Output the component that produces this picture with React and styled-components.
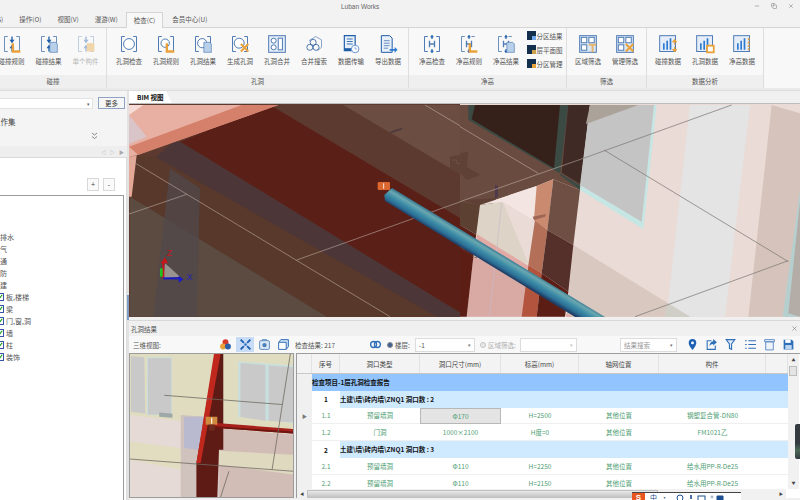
import React from 'react';
import styled, { createGlobalStyle } from 'styled-components';
import { Minus, Copy, X } from 'lucide-react';

const GlobalStyle = createGlobalStyle`
    html, body {
        margin: 0;
        padding: 0;
        background: #f0f0f0;
    }
    body {
        font-family: "Noto Sans CJK SC", "Liberation Sans", sans-serif;
        font-size: 6.5px;
        color: #4a4a4a;
    }
`
const Page = styled.div`
    width: 800px;
    height: 500px;
    position: relative;
    overflow: hidden;
    display: flex;
    flex-direction: column;
    background: #f0f0f0;
`
const TitleBar = styled.div`
    height: 12px;
    display: flex;
    align-items: center;
    background: #f2f2f2;
`
const TitleText = styled.div`
    margin-left: 341px;
    width: 40px;
    font: 6.5px "Liberation Sans", sans-serif;
    color: #666;
    white-space: nowrap;
`
const WindowButtons = styled.div`
    margin-left: auto;
    display: flex;
    gap: 11px;
    padding-right: 6px;
    color: #777;
`
const TabRow = styled.div`
    height: 16px;
    display: flex;
    align-items: flex-end;
    border-bottom: 1px solid #d4d4d4;
    background: #f2f2f2;
    box-sizing: border-box;
`
const Tab = styled.div`
    height: 15px;
    line-height: 15px;
    padding: 0 8px;
    box-sizing: border-box;
    white-space: nowrap;
    color: #555;
    margin-left: ${props => props.$ml || 0};
    ${props => props.$active && `
        background: #f8f8f8;
        border: 1px solid #d4d4d4;
        border-bottom: none;
        height: 16px;
        padding: 0 7px;
        margin-bottom: -1px;
    `}
`
const Ribbon = styled.div`
    height: 60px;
    display: flex;
    background: #f8f8f8;
`
const Group = styled.div`
    width: ${props => props.$w}px;
    display: flex;
    flex-direction: column;
    border-right: 1px solid #dedede;
    box-sizing: content-box;
    overflow: hidden;
`
const GroupItems = styled.div`
    height: 47px;
    display: flex;
    justify-content: ${props => props.$end ? 'flex-end' : 'flex-start'};
    padding: 0 ${props => props.$pr || 0}px 0 ${props => props.$pl || 0}px;
`
const GroupLabel = styled.div`
    height: 13px;
    line-height: 13px;
    text-align: center;
    background: #efefef;
    color: #555;
`
const RibbonItem = styled.div`
    width: 37px;
    flex-shrink: 0;
    display: flex;
    flex-direction: column;
    align-items: center;
    padding-top: 6px;
    gap: 2px;
    white-space: nowrap;
    color: ${props => props.$disabled ? '#b5b5b5' : '#555'};
    & svg {
        opacity: ${props => props.$disabled ? 0.4 : 1};
    }
`
const SmallColumn = styled.div`
    display: flex;
    flex-direction: column;
    gap: 5px;
    padding: 3px 0 0 2px;
`
const SmallItem = styled.div`
    display: flex;
    align-items: center;
    gap: 1px;
    height: 9px;
    white-space: nowrap;
    color: #555;
`
const SmallIcon = styled.span`
    width: 9px;
    height: 9px;
    background: #12304e;
    display: flex;
    align-items: flex-end;
    justify-content: flex-end;
    & i {
        width: 4px;
        height: 4px;
        background: ${props => props.$tone};
    }
`
const RibbonBottom = styled.div`
    height: 3px;
    background: #eaeaea;
    border-bottom: 1px solid #dcdcdc;
    box-sizing: border-box;
`
const Body = styled.div`
    flex: 1;
    min-height: 0;
    display: flex;
`
const LeftPanel = styled.div`
    width: 127px;
    flex-shrink: 0;
    display: flex;
    flex-direction: column;
    background: #f4f4f4;
`
const SearchRow = styled.div`
    display: flex;
    align-items: center;
    padding-top: 6px;
    gap: 5px;
`
const SearchBox = styled.div`
    width: 93px;
    height: 11px;
    background: #fff;
    border: 1px solid #e2e2e2;
    border-left: none;
    box-sizing: border-box;
    display: flex;
    align-items: center;
    justify-content: flex-end;
    padding-right: 2px;
    color: #666;
    font-size: 5px;
`
const MoreButton = styled.div`
    width: 27px;
    height: 12px;
    line-height: 10px;
    background: #f6f6f6;
    border: 1px solid #8ea3c4;
    box-sizing: border-box;
    text-align: center;
    color: #333;
`
const SetLabel = styled.div`
    margin: 7px 0 0 -7px;
    font-size: 7.5px;
    line-height: 11px;
    color: #444;
`
const ChevronRow = styled.div`
    height: 9px;
    margin-top: 5px;
    display: flex;
    justify-content: flex-end;
    padding-right: 29px;
`
const PagerStrip = styled.div`
    height: 12px;
    margin-top: 5px;
    background: #eeeeee;
    border-bottom: 1px solid #dadada;
    box-sizing: border-box;
    display: flex;
    align-items: center;
    justify-content: flex-end;
    gap: 4px;
    padding-right: 3px;
`
const PagerArrow = styled.span`
    color: #a8a8a8;
    font-size: 5px;
    line-height: 6px;
    width: 5px;
    text-align: center;
`
const TreePanel = styled.div`
    flex: 1;
    min-height: 0;
    display: flex;
    flex-direction: column;
    background: #fff;
    border-right: 1px solid #dcdcdc;
`
const ExpandRow = styled.div`
    height: 37px;
    padding: 20px 0 0 87px;
    box-sizing: border-box;
    display: flex;
    gap: 4px;
`
const ExpandButton = styled.div`
    width: 12px;
    height: 13px;
    background: #fafafa;
    border: 1px solid #d8d8d8;
    box-sizing: border-box;
    text-align: center;
    color: #444;
    font: 7px "Liberation Sans", sans-serif;
    line-height: 11px;
`
const TreeBox = styled.div`
    flex: 1;
    margin-right: 2px;
    border-top: 1px solid #9a9a9a;
    border-right: 1px solid #9a9a9a;
    padding-top: 35px;
    overflow: hidden;
`
const TreeRow = styled.div`
    height: 12px;
    line-height: 12px;
    display: flex;
    align-items: center;
    gap: 2px;
    white-space: nowrap;
    font-size: 7px;
    color: #555;
    margin-left: ${props => props.$nested ? '-4px' : '-7px'};
`
const TreeCheck = styled.span`
    width: 8px;
    height: 8px;
    background: #fff;
    border: 1px solid #3a55a8;
    box-sizing: border-box;
    display: flex;
`
const Splitter = styled.div`
    width: 2px;
    flex-shrink: 0;
    background: #e2e2e2;
    position: relative;
    &::after {
        content: "";
        position: absolute;
        left: 0;
        top: 204px;
        width: 2px;
        height: 25px;
        background: #7f9cc2;
    }
`
const Workspace = styled.div`
    flex: 1;
    min-width: 0;
    display: flex;
    flex-direction: column;
`
const ViewTabStrip = styled.div`
    height: 12px;
    display: flex;
    align-items: flex-end;
    background: #f0f0f0;
    border-bottom: 1px solid #bdbdbd;
    box-sizing: content-box;
`
const ViewTab = styled.div`
    width: 43px;
    height: 12px;
    line-height: 12px;
    background: #fff;
    padding-left: 8px;
    box-sizing: border-box;
    color: #111;
    font-weight: 700;
    clip-path: polygon(0 0, 86% 0, 100% 100%, 0 100%);
`
const Viewport = styled.div`
    height: 213px;
    flex-shrink: 0;
    & svg {
        display: block;
    }
`
const ResultPanel = styled.div`
    flex: 1;
    min-height: 0;
    margin-top: 3px;
    display: flex;
    flex-direction: column;
    border-top: 1px solid #d8d8d8;
`
const PanelTitle = styled.div`
    height: 15px;
    display: flex;
    align-items: center;
    justify-content: space-between;
    padding: 0 2px;
    color: #555;
    background: #f0f0f0;
`
const Toolbar = styled.div`
    height: 17px;
    display: flex;
    align-items: center;
    padding-left: 4px;
    background: #f8f8f8;
`
const ToolText = styled.div`
    width: ${props => props.$w}px;
    margin-left: ${props => props.$ml || 0}px;
    flex-shrink: 0;
    white-space: nowrap;
    color: ${props => props.$muted ? '#b0b0b0' : '#555'};
`
const ToolButton = styled.div`
    width: 18px;
    height: 15px;
    flex-shrink: 0;
    margin-left: ${props => props.$ml || 0}px;
    display: flex;
    align-items: center;
    justify-content: center;
    background: ${props => props.$active ? '#c8dcf5' : 'transparent'};
`
const Radio = styled.span`
    width: 6px;
    height: 6px;
    flex-shrink: 0;
    margin-left: ${props => props.$ml || 0}px;
    border-radius: 50%;
    box-sizing: border-box;
    border: 1px solid ${props => props.$on ? '#8a8a8a' : '#c4c4c4'};
    background: ${props => props.$on ? '#3d5f94' : '#e8e8e8'};
`
const Select = styled.div`
    width: ${props => props.$w}px;
    height: 14px;
    margin-left: ${props => props.$ml || 0}px;
    flex-shrink: 0;
    box-sizing: border-box;
    display: flex;
    align-items: center;
    justify-content: space-between;
    padding: 0 3px;
    background: #fff;
    border: 1px solid #dcdcdc;
    color: ${props => props.$hint ? '#999' : '#555'};
    &::after {
        content: "▾";
        margin-left: auto;
        font-size: 5px;
        color: ${props => props.$disabled ? '#c0c0c0' : '#777'};
    }
`
const ResultBody = styled.div`
    flex: 1;
    min-height: 0;
    display: flex;
    gap: 2px;
    padding-bottom: 2px;
`
const ThumbView = styled.div`
    width: 165px;
    flex-shrink: 0;
    border: 1px solid #9c9c9c;
    box-sizing: border-box;
    & svg {
        display: block;
    }
`
const TableFrame = styled.div`
    flex: 1;
    min-width: 0;
    display: flex;
    flex-direction: column;
    border-top: 1px solid #9c9c9c;
    border-left: 1px solid #9c9c9c;
    background: #fff;
`
const TableMain = styled.div`
    flex: 1;
    min-height: 0;
    display: flex;
`
const TableGrid = styled.div`
    width: 491px;
    flex-shrink: 0;
    overflow: hidden;
`
const COLUMNS = '15px 28px 80px 81px 78px 80px 107px 22px';
const HeaderRow = styled.div`
    height: 20px;
    display: grid;
    grid-template-columns: ${COLUMNS};
    background: #f3f3f3;
    border-bottom: 1px solid #c9c9c9;
    box-sizing: border-box;
    color: #444;
    font-size: 6.5px;
`
const HeaderCell = styled.div`
    display: flex;
    align-items: center;
    justify-content: center;
    border-right: 1px solid #e2e2e2;
    box-sizing: border-box;
    white-space: nowrap;
`
const DataRow = styled.div`
    height: 16.8px;
    display: grid;
    grid-template-columns: ${COLUMNS};
    background: #fff;
`
const RowHead = styled.div`
    display: flex;
    align-items: center;
    justify-content: center;
    background: #f0f0f0;
    font-size: 5px;
    color: #777;
`
const DataCell = styled.div`
    display: flex;
    align-items: center;
    justify-content: center;
    white-space: nowrap;
    color: #4f9e74;
    border-bottom: 1px solid #efefef;
    box-sizing: border-box;
    font-size: 6.5px;
    ${props => props.$selected && `
        background: #e4e4e4;
        border: 1px solid #b8b8b8;
    `}
`
const SeqCell = styled.div`
    display: flex;
    align-items: center;
    justify-content: center;
    font-weight: 700;
    font-size: 6.5px;
    color: #111;
`
const BannerCell = styled.div`
    grid-column: ${props => props.$wide ? '2 / -1' : '3 / -1'};
    display: flex;
    align-items: center;
    background: ${props => props.$wide ? '#92c5ff' : '#cfe9ff'};
    font-weight: 700;
    font-size: 6.5px;
    color: #111;
    white-space: nowrap;
    padding-bottom: 1px;
    box-sizing: border-box;
`
const VScroll = styled.div`
    width: 11px;
    flex-shrink: 0;
    display: flex;
    flex-direction: column;
    align-items: center;
    justify-content: space-between;
    background: #f1f1f1;
    font-size: 4px;
    color: #444;
    padding: 3px 0;
    box-sizing: border-box;
    position: relative;
`
const VThumb = styled.div`
    position: absolute;
    top: 12px;
    left: 1px;
    width: 8px;
    height: 10px;
    background: #e4e4e4;
    border: 1px solid #bdbdbd;
    box-sizing: border-box;
`
const HScroll = styled.div`
    height: 9px;
    margin-right: 14px;
    flex-shrink: 0;
    display: flex;
    align-items: center;
    justify-content: space-between;
    background: #f1f1f1;
    padding: 0 3px;
    font-size: 4px;
    color: #444;
`
const HThumb = styled.div`
    width: 351px;
    height: 8px;
    margin-left: 3px;
    margin-right: auto;
    background: linear-gradient(#e8e8e8, #c4c4c4);
    border: 1px solid #c0c0c0;
    box-sizing: border-box;
`
const ImeBar = styled.div`
    position: absolute;
    left: 632px;
    top: 492px;
    width: 109px;
    height: 9px;
    display: flex;
    align-items: center;
    gap: 4px;
    background: #fff;
    border-top: 1px solid #444;
    box-sizing: border-box;
    color: #1d4f91;
    font-size: 7px;
    line-height: 8px;
`
const ImeLogo = styled.span`
    width: 13px;
    height: 9px;
    margin-right: 1px;
    background: #e8551f;
    color: #fff;
    font: 700 8px "Liberation Sans", sans-serif;
    text-align: center;
    line-height: 9px;
`
const EdgeTab = styled.div`
    position: absolute;
    right: 0;
    top: 424px;
    width: 5px;
    height: 35px;
    background: linear-gradient(#333b40 55%, #4d6a58 75%, #333b40);
    border-radius: 2px 0 0 2px;
`
// ====================== style end ======================= //

const B = '#4f7cb5';
const D = '#1f5da8';
const O = '#e9a23b';
const L = '#b9d0ea';

const Brackets = () => <path d="M7 3H3v18h4M17 3h4v18h-4" fill="none" stroke={B} strokeWidth="1.2" />;
const HBars = () => (
    <g fill="none" stroke={B} strokeWidth="1.4">
        <path d="M9 8v8M15 8v8M9 12h6" strokeWidth="1.6" />
        <path d="M12 2v4M12 18v4" stroke={D} />
        <path d="M10.5 4 12 2l1.5 2M10.5 20l1.5 2 1.5-2" stroke={D} />
    </g>
);
const Collide = () => (
    <g>
        <path d="M7 3H3v18h4M17 3h4v18h-4" fill="none" stroke={B} strokeWidth="1" />
        <path d="M12 3v7M12 21v-7" stroke={D} strokeWidth="1.6" />
        <path d="M9 7l3 4 3-4zM9 17l3-4 3 4z" fill={D} />
    </g>
);
const OrangeL = () => <path d="M13 11v10h9" fill="none" stroke={O} strokeWidth="2.8" />;
const Doc = () => <path d="M13 10h7l2 2v10h-9z" fill={L} stroke={B} strokeWidth=".8" />;
const Cross = () => <path d="M13 12l9 9M22 12l-9 9" stroke={O} strokeWidth="2.4" />;
const Grid = () => (
    <g fill="none" stroke={B} strokeWidth="1.2">
        <rect x="2" y="2" width="20" height="20" fill="#dbe7f5" />
        <rect x="4" y="4" width="6.5" height="6.5" fill="#fff" />
        <rect x="13" y="4" width="6.5" height="6.5" fill="#fff" />
        <rect x="4" y="13" width="6.5" height="6.5" fill="#fff" />
    </g>
);
const Chart = () => (
    <g>
        <rect x="2" y="2" width="19" height="19" fill="#e4edf8" stroke={B} strokeWidth="1.2" />
        <path d="M6 11h2v8H6zM10 8h2v11h-2zM14 5h2v14h-2z" fill="#2c7bd0" />
    </g>
);

const ICONS = {
    collideRule: <><Collide /><OrangeL /></>,
    collideResult: <><Collide /><Doc /></>,
    collideSingle: <><Collide /><rect x="13" y="11" width="9" height="10" fill={O} /></>,
    holeCheck: <><Brackets /><circle cx="12" cy="12" r="6.5" fill="#fff" stroke={B} strokeWidth="1.2" /></>,
    holeRule: <><Brackets /><circle cx="11" cy="11" r="5" fill="#fff" stroke={B} strokeWidth="1.2" /><OrangeL /></>,
    holeResult: <><Brackets /><circle cx="11" cy="11" r="5.5" fill="#fff" stroke={B} strokeWidth="1.2" /><Doc /></>,
    holeMake: <><Brackets /><circle cx="11" cy="11" r="6" fill="#fff" stroke={B} strokeWidth="1.2" /><Cross /></>,
    holeMerge: (
        <g fill="none" stroke={B} strokeWidth="1.2">
            <rect x="2" y="2" width="20" height="20" fill="#e4edf8" />
            <circle cx="8" cy="8" r="3" fill="#fff" />
            <circle cx="8" cy="16" r="3" fill="#fff" />
            <rect x="13.5" y="5" width="5" height="14" fill="#fff" />
        </g>
    ),
    mergeSearch: (
        <g fill="none" stroke="#3f6ca5" strokeWidth="1.1">
            <path d="M6 8l8-5 7 4v9l-5 4" stroke="#7f9ec4" />
            <circle cx="11" cy="10" r="3.6" />
            <circle cx="7" cy="16" r="3.6" />
            <circle cx="14.5" cy="16" r="3.6" />
        </g>
    ),
    dataTransfer: (
        <g>
            <path d="M4 2h13v18H4z" fill="#e8f0fa" stroke={D} strokeWidth="1.4" />
            <path d="M7 6h7M7 9h7M7 12h7" stroke={D} strokeWidth="1" />
            <path d="M4 17h9v3H4z" fill={D} />
            <circle cx="17" cy="18" r="4.5" fill="#fff" stroke="#6d9bd6" strokeWidth="1.2" />
            <path d="M17 15.5V18h2" fill="none" stroke="#6d9bd6" />
        </g>
    ),
    dataExport: (
        <g>
            <path d="M4 2h10l3 3v17H4z" fill="#e8f0fa" stroke={D} strokeWidth="1.2" />
            <path d="M7 8h7M7 11h7M7 14h7M7 17h5" stroke={B} strokeWidth="1" />
            <path d="M14 18h6v-2.5l3.5 3.5-3.5 3.5V20h-6z" fill="#2c7bd0" />
        </g>
    ),
    heightCheck: <><Brackets /><HBars /></>,
    heightRule: <><path d="M7 3H3v18h4M15 3h4" fill="none" stroke={B} strokeWidth="1" /><HBars /><OrangeL /></>,
    heightResult: <><path d="M7 3H3v18h4M15 3h4" fill="none" stroke={B} strokeWidth="1" /><HBars /><Doc /></>,
    filterArea: <><Grid /><path d="M13 13h9M17.5 13v9" stroke={O} strokeWidth="2.4" opacity=".7" /></>,
    filterPipe: <><Grid /><Cross /></>,
    dataCollide: <><Chart /><path d="M20 7v6M20 15v6M17.5 9.5 20 6.5l2.5 3zM17.5 18.5l2.5 3 2.5-3z" stroke={O} fill={O} strokeWidth="1.2" /></>,
    dataHole: <><Chart /><rect x="14.5" y="14" width="8" height="8" fill="#fff" stroke={O} strokeWidth="2.2" /></>,
    dataHeight: <><Chart /><path d="M20 5v16" stroke={O} strokeWidth="2" strokeDasharray="2.5 1.5" /></>
};
const RibbonIcon = ({ name }) => (
    <svg width="20" height="20" viewBox="0 0 24 24">{ICONS[name]}</svg>
);

const GROUPS = [
    { title: '碰撞', width: 106, end: true, pr: 2, items: [['collideRule', '碰撞规则'], ['collideResult', '碰撞结果'], ['collideSingle', '单个构件', true]] },
    { title: '孔洞', width: 301, pl: 3.5, items: [['holeCheck', '孔洞检查'], ['holeRule', '孔洞规则'], ['holeResult', '孔洞结果'], ['holeMake', '生成孔洞'], ['holeMerge', '孔洞合并'], ['mergeSearch', '合并搜索'], ['dataTransfer', '数据传输'], ['dataExport', '导出数据']] },
    { title: '净高', width: 157, pl: 4.5, small: true, items: [['heightCheck', '净高检查'], ['heightRule', '净高规则'], ['heightResult', '净高结果']] },
    { title: '筛选', width: 79, pl: 2.5, items: [['filterArea', '区域筛选'], ['filterPipe', '管理筛选']] },
    { title: '数据分析', width: 116, pl: 2.5, items: [['dataCollide', '碰撞数据'], ['dataHole', '孔洞数据'], ['dataHeight', '净高数据']] }
];
const SMALL_ITEMS = [['#6fa7e8', '分区结果'], ['#c9a24a', '层平面图'], ['#e9a23b', '分区管理']];
const TREE_TOP = ['给排水', '电气', '暖通', '消防', '土建'];
const TREE_CHECKED = ['板,楼梯', '梁', '门,窗,洞', '墙', '柱', '装饰'];
const HEADERS = ['', '序号', '洞口类型', '洞口尺寸(mm)', '标高(mm)', '轴网位置', '构件', ''];
const ROWS = [
    { banner: '检查项目-1层孔洞检查报告', wide: true },
    { seq: '1', banner: '土建\\墙\\砖内墙\\ZNQ1  洞口数 : 2' },
    { cells: ['1.1', '预留墙洞', 'Φ170', 'H=2500', '其他位置', '钢塑复合管-DN80'], mark: true },
    { cells: ['1.2', '门洞', '1000×2100', 'H度=0', '其他位置', 'FM1021乙'] },
    { seq: '2', banner: '土建\\墙\\砖内墙\\ZNQ1  洞口数 : 3' },
    { cells: ['2.1', '预留墙洞', 'Φ110', 'H=2250', '其他位置', '给水用PP-R-De25'] },
    { cells: ['2.2', '预留墙洞', 'Φ110', 'H=2150', '其他位置', '给水用PP-R-De25'] }
];

const BimScene = () => (
    <svg width="671" height="213" viewBox="387 312 2013 639" preserveAspectRatio="none">
        <g transform="translate(390 300)">
            <rect x="-3" y="12" width="1023" height="640" fill="#5c3a2f" />
            <polygon points="640,15 1020,15 1020,240" fill="#6c4d41" />
            <polygon points="420,15 1020,372 1020,650 1010,650 150,125" fill="#5a2018" />
            <polygon points="130,125 150,125 1010,650 920,650 75,175" fill="#4c3638" />
            <polygon points="0,170 75,170 920,650 780,650 0,180" fill="#59392b" />
            <polygon points="0,180 780,650 590,650 0,290" fill="#57382a" />
            <polygon points="0,290 590,650 0,650" fill="#5b4b41" />
            <polygon points="120,205 210,265 200,650 70,650" fill="#50484c" opacity=".75" />
            <polygon points="-3,15 445,15 20,165 -3,172" fill="#e8b0a3" />
            <polygon points="-3,15 40,15 -3,45" fill="#f6dcd6" />
            <polygon points="-3,45 50,110 -3,132" fill="#d9c4c8" />
            <polygon points="335,15 445,15 25,165 -3,140" fill="#d5806a" />
            <polygon points="-3,172 20,165 5,290 -3,290" fill="#e3a898" />
            <polygon points="780,95 815,83 818,88 782,100" fill="#4c3a3c" />
            <polygon points="960,170 1020,160 1020,240 960,205" fill="#5f4136" />
            <path d="M965 180h15v10h15v10h15v10" fill="none" stroke="#6f5145" strokeWidth="3" />
            <g fill="none" stroke="#c7b8ad" strokeOpacity=".75" strokeWidth="2.2">
                <path d="M0 180 780 650" />
                <path d="M-3 342 170 283" />
                <path d="M500 480 1020 295" />
                <path d="M885 15 1020 95" />
            </g>
            <rect x="743" y="246" width="37" height="24" rx="3" fill="#d9672f" />
            <path d="M761 250v16" stroke="#f6e4d8" strokeWidth="3" />
            <polygon points="105,490 150,530 100,535" fill="#9a9490" />
            <path d="M100 535V485" stroke="#c8151b" strokeWidth="6" />
            <path d="M100 535h50" stroke="#1a1ac8" strokeWidth="6" />
            <path d="M94 530V505" stroke="#21c31f" strokeWidth="8" />
            <polygon points="92,490 105,472 114,490" fill="#c8151b" />
            <polygon points="146,527 160,538 146,548" fill="#1a1ac8" />
            <text x="110" y="468" fontSize="26" fill="#c8151b" fontFamily="Liberation Sans">Z</text>
            <text x="170" y="540" fontSize="26" fill="#2020b8" fontFamily="Liberation Sans">X</text>
        </g>
        <g transform="translate(1380 300)">
            <rect x="0" y="12" width="1023" height="640" fill="#eadbd6" />
            <polygon points="0,15 390,15 360,270 280,238 230,258 60,315 50,400 0,375" fill="#6a4b3f" />
            <polygon points="0,300 60,315 50,400 110,295" fill="#5f4034" />
            <polygon points="0,305 60,315 50,405 0,375" fill="#5c4032" />
            <polygon points="0,375 50,405 50,480 0,440" fill="#5a2018" />
            <polygon points="0,160 25,155 20,200 60,225 20,240 0,220" fill="#5f4136" />
            <polygon points="25,15 325,15 300,225 360,270 360,255 25,60" fill="#3c4a44" />
            <polygon points="45,15 300,15 282,205 35,58" fill="#35201a" />
            <polygon points="325,15 390,15 365,255 305,218" fill="#3f2a25" />
            <polygon points="390,15 590,15 550,388 360,270" fill="#c6e6e4" />
            <polygon points="390,15 582,15 545,365 360,255" fill="#c4c4c4" />
            <polygon points="390,15 535,15 378,72" fill="#aba39a" />
            <polygon points="690,15 870,15 795,650 620,650" fill="#e4e4e4" />
            <polygon points="935,15 1020,40 1020,650 865,650" fill="#d6c4bc" />
            <polygon points="1020,270 968,650 1020,650" fill="#b5cfcf" />
            <polygon points="1020,305 985,640 1020,650" fill="#b4aca6" />
            <polygon points="340,435 690,650 320,650" fill="#d9c8c0" />
            <polygon points="620,610 690,650 615,650" fill="#cfcfc8" />
            <polygon points="60,315 230,258 220,360 128,305" fill="#f3e6e2" />
            <polygon points="60,315 128,305 205,490 40,470" fill="#ddd3c6" />
            <polygon points="40,470 205,530 185,650 20,650" fill="#d9a9a4" />
            <polygon points="205,495 225,360 262,390 245,520" fill="#b36f57" />
            <polygon points="230,258 280,238 262,390 222,360" fill="#c98a70" />
            <polygon points="205,495 245,520 230,650 185,650" fill="#b2543e" />
            <polygon points="280,238 360,270 340,435 262,390" fill="#6f4f43" />
            <polygon points="262,390 340,435 325,575 245,520" fill="#55302a" />
            <polygon points="245,520 325,575 315,650 230,650" fill="#5c1e14" />
            <polygon points="0,440 40,470 20,650 0,650" fill="#5c1e14" />
            <polygon points="320,640 340,650 318,650" fill="#e2aaa5" />
            <polygon points="50,402 205,497 202,520 50,425" fill="#e2aaa5" />
            <polygon points="218,350 258,342 255,350 222,360" fill="#9c6554" />
            <polygon points="105,255 114,258 114,290 105,295" fill="#4c3a4a" />
            <path d="M125 310 88 650" stroke="#c9bcc8" strokeWidth="3" opacity=".7" fill="none" />
            <g fill="none" strokeWidth="2.2">
                <path d="M0 80 235 220" stroke="#c7b8ad" strokeOpacity=".75" />
                <path d="M0 305 370 175" stroke="#c7b8ad" strokeOpacity=".75" />
                <path d="M370 175 815 15" stroke="#7d7774" />
                <path d="M432 150 985 485" stroke="#7d7774" />
                <path d="M985 482 525 650" stroke="#7d7774" />
            </g>
        </g>
        <defs>
            <linearGradient id="pipeTone" gradientUnits="userSpaceOnUse" x1="1400" y1="697" x2="1376" y2="737">
                <stop offset="0" stopColor="#2f6f8c" />
                <stop offset=".25" stopColor="#6aa8b0" />
                <stop offset=".55" stopColor="#3a8aa6" />
                <stop offset=".8" stopColor="#2c6f96" />
                <stop offset="1" stopColor="#1f3f66" />
            </linearGradient>
        </defs>
        <polygon points="1176,564 1815,951 1725,951 1155,603 1153,585" fill="url(#pipeTone)" />
    </svg>
);

const ThumbScene = () => (
    <svg width="163" height="143" viewBox="12 115 491 433" preserveAspectRatio="none">
        <rect x="12" y="115" width="491" height="433" fill="#d8c8c5" />
        <rect x="12" y="115" width="491" height="240" fill="#e0dcc0" />
        <polygon points="63,125 138,125 138,300 63,300" fill="#c8dfdf" />
        <polygon points="15,122 55,125 58,295 15,290" fill="#c9c9c9" />
        <polygon points="66,128 136,128 136,298 66,298" fill="#c9c9c9" />
        <polygon points="338,138 503,150 503,325 338,305" fill="#c8dfdf" />
        <polygon points="345,142 420,148 420,318 345,305" fill="#c9c9c9" />
        <polygon points="430,150 503,155 503,322 430,318" fill="#c9c9c9" />
        <polygon points="12,300 165,318 165,548 12,548" fill="#e6dad6" />
        <polygon points="12,380 165,400 165,465 12,435" fill="#e2dcc0" />
        <polygon points="100,292 140,296 140,308 100,305" fill="#9ea8a8" />
        <polygon points="165,300 240,305 230,548 165,548" fill="#d0c2bc" />
        <polygon points="175,305 235,305 218,405 175,400" fill="#b9b9d0" />
        <polygon points="285,340 503,360 503,548 280,548" fill="#d2bdb6" />
        <polygon points="280,408 503,420 503,480 280,450" fill="#dfd9c0" />
        <polygon points="268,115 293,115 293,405 280,405 275,548 212,548 212,445" fill="#5e1a14" />
        <polygon points="265,115 285,115 225,445 212,445" fill="#c0281e" />
        <polygon points="262,323 503,342 503,356 262,338" fill="#a8201a" />
        <polygon points="262,333 503,350 503,356 262,338" fill="#6e1612" />
        <rect x="240" y="305" width="35" height="24" fill="#d08a40" />
        <path d="M258 308v18" stroke="#f4ead8" strokeWidth="4" />
        <rect x="250" y="329" width="18" height="18" fill="#6e2a1c" />
        <g fill="none" stroke="#6f6a62" strokeWidth="2.4">
            <path d="M115 240 470 268" />
            <path d="M12 433 503 470" />
            <path d="M495 115 440 465" />
            <path d="M310 470 285 548" />
        </g>
    </svg>
);

const ToolGlyph = ({ children }) => (
    <svg width="13" height="13" viewBox="0 0 24 24">{children}</svg>
);

const App = () => {
    return (
        <Page>
            <GlobalStyle />
            <TitleBar>
                <TitleText>Luban Works</TitleText>
                <WindowButtons>
                    <Minus size={6} />
                    <Copy size={6} />
                    <X size={6} />
                </WindowButtons>
            </TitleBar>
            <TabRow>
                <Tab $ml="-13px">(S)</Tab>
                <Tab>操作(O)</Tab>
                <Tab>视图(V)</Tab>
                <Tab>漫游(W)</Tab>
                <Tab $active>检查(C)</Tab>
                <Tab $ml="1px">会员中心(U)</Tab>
            </TabRow>
            <Ribbon>
                {GROUPS.map(group => (
                    <Group key={group.title} $w={group.width}>
                        <GroupItems $end={group.end} $pl={group.pl} $pr={group.pr}>
                            {group.items.map(([icon, label, disabled]) => (
                                <RibbonItem key={label} $disabled={disabled}>
                                    <RibbonIcon name={icon} />
                                    {label}
                                </RibbonItem>
                            ))}
                            {group.small && (
                                <SmallColumn>
                                    {SMALL_ITEMS.map(([tone, label]) => (
                                        <SmallItem key={label}>
                                            <SmallIcon $tone={tone}><i /></SmallIcon>
                                            {label}
                                        </SmallItem>
                                    ))}
                                </SmallColumn>
                            )}
                        </GroupItems>
                        <GroupLabel>{group.title}</GroupLabel>
                    </Group>
                ))}
            </Ribbon>
            <RibbonBottom />
            <Body>
                <LeftPanel>
                    <SearchRow>
                        <SearchBox>▾</SearchBox>
                        <MoreButton>更多</MoreButton>
                    </SearchRow>
                    <SetLabel>工作集</SetLabel>
                    <ChevronRow>
                        <svg width="7" height="8" viewBox="0 0 7 8" fill="none" stroke="#888">
                            <path d="M1 1l2.5 2L6 1M1 4.5l2.5 2 2.5-2" />
                        </svg>
                    </ChevronRow>
                    <PagerStrip>
                        <PagerArrow>◁</PagerArrow>
                        <PagerArrow>▷</PagerArrow>
                        <PagerArrow>▶</PagerArrow>
                    </PagerStrip>
                    <TreePanel>
                        <ExpandRow>
                            <ExpandButton>+</ExpandButton>
                            <ExpandButton>-</ExpandButton>
                        </ExpandRow>
                        <TreeBox>
                            {TREE_TOP.map(name => <TreeRow key={name}>{name}</TreeRow>)}
                            {TREE_CHECKED.map(name => (
                                <TreeRow key={name} $nested>
                                    <TreeCheck>
                                        <svg viewBox="0 0 8 8" fill="none" stroke="#12a012" strokeWidth="1.5">
                                            <path d="M1 4l2 2 4-5" />
                                        </svg>
                                    </TreeCheck>
                                    {name}
                                </TreeRow>
                            ))}
                        </TreeBox>
                    </TreePanel>
                </LeftPanel>
                <Splitter />
                <Workspace>
                    <ViewTabStrip>
                        <ViewTab>BIM 视图</ViewTab>
                    </ViewTabStrip>
                    <Viewport>
                        <BimScene />
                    </Viewport>
                    <ResultPanel>
                        <PanelTitle>
                            孔洞结果
                            <X size={7} color="#777" />
                        </PanelTitle>
                        <Toolbar>
                            <ToolText $w={27}>三维视图:</ToolText>
                            <ToolButton $ml={56}>
                                <ToolGlyph>
                                    <circle cx="12" cy="8" r="5.5" fill="#d93b2b" />
                                    <circle cx="7.5" cy="15.5" r="5.5" fill="#e9a23b" />
                                    <circle cx="16.5" cy="15.5" r="5.5" fill="#2d5fa8" />
                                </ToolGlyph>
                            </ToolButton>
                            <ToolButton $ml={2} $active>
                                <ToolGlyph>
                                    <path d="M3 3l6 6M21 3l-6 6M3 21l6-6M21 21l-6-6" stroke="#1d5fb4" strokeWidth="3.4" />
                                    <rect x="10" y="10" width="4" height="4" fill="#1d5fb4" />
                                </ToolGlyph>
                            </ToolButton>
                            <ToolButton $ml={1}>
                                <ToolGlyph>
                                    <rect x="3" y="5" width="18" height="16" rx="2" fill="#dce9f7" stroke="#4a7fba" strokeWidth="1.6" />
                                    <circle cx="12" cy="13" r="4" fill="#4a7fba" />
                                    <path d="M8 5V3h8v2" stroke="#4a7fba" fill="none" strokeWidth="1.6" />
                                </ToolGlyph>
                            </ToolButton>
                            <ToolButton $ml={1}>
                                <ToolGlyph>
                                    <path d="M3 8l4-5h14v13l-4 5" fill="#cfe0f3" stroke="#2f6fb8" strokeWidth="1.8" />
                                    <path d="M3 8h14v13H3z" fill="#fff" stroke="#2f6fb8" strokeWidth="1.8" />
                                </ToolGlyph>
                            </ToolButton>
                            <ToolText $ml={3} $w={44}>检查结果: 217</ToolText>
                            <ToolButton $ml={27}>
                                <ToolGlyph>
                                    <circle cx="8.5" cy="12" r="5.5" fill="none" stroke="#2f6fb8" strokeWidth="2.4" />
                                    <circle cx="15.5" cy="12" r="5.5" fill="none" stroke="#2f6fb8" strokeWidth="2.4" />
                                </ToolGlyph>
                            </ToolButton>
                            <Radio $ml={3} $on />
                            <ToolText $ml={2} $w={18}>楼层:</ToolText>
                            <Select $ml={2} $w={60}>-1</Select>
                            <Radio $ml={5} />
                            <ToolText $ml={2} $w={30} $muted>区域筛选:</ToolText>
                            <Select $ml={2} $w={57} $disabled />
                            <Select $ml={43} $w={57} $hint>结果搜索</Select>
                            <ToolButton $ml={6}>
                                <ToolGlyph>
                                    <path d="M12 2a7 7 0 0 1 7 7c0 5-7 13-7 13S5 14 5 9a7 7 0 0 1 7-7z" fill="#1d5fb4" />
                                    <circle cx="12" cy="9" r="2.6" fill="#fff" />
                                </ToolGlyph>
                            </ToolButton>
                            <ToolButton $ml={1}>
                                <ToolGlyph>
                                    <path d="M12 5H4v16h15v-7" fill="none" stroke="#2f6fb8" strokeWidth="2" />
                                    <path d="M15 2l7 6-7 6v-3c-4 0-6 2-7 5 0-6 3-9 7-10z" fill="#2f6fb8" />
                                </ToolGlyph>
                            </ToolButton>
                            <ToolButton $ml={1}>
                                <ToolGlyph>
                                    <path d="M4 3h16l-6 8v10l-4-2v-8z" fill="#dce9f7" stroke="#2f6fb8" strokeWidth="2" />
                                </ToolGlyph>
                            </ToolButton>
                            <ToolButton $ml={2}>
                                <ToolGlyph>
                                    <path d="M8 5h14M8 12h14M8 19h14M2 5h3M2 12h3M2 19h3" stroke="#2f6fb8" strokeWidth="2" />
                                </ToolGlyph>
                            </ToolButton>
                            <ToolButton $ml={1}>
                                <ToolGlyph>
                                    <path d="M5 7h14v15H5zM3 3h18v4H3z" fill="#eef3fa" stroke="#5f8fc6" strokeWidth="1.8" />
                                </ToolGlyph>
                            </ToolButton>
                            <ToolButton $ml={1}>
                                <ToolGlyph>
                                    <path d="M3 3h15l3 3v15H3z" fill="#2f6fb8" />
                                    <path d="M6 3h10v6H6z" fill="#fff" />
                                    <path d="M6 13h12v8H6z" fill="#bcd5f0" />
                                </ToolGlyph>
                            </ToolButton>
                        </Toolbar>
                        <ResultBody>
                            <ThumbView>
                                <ThumbScene />
                            </ThumbView>
                            <TableFrame>
                                <TableMain>
                                    <TableGrid>
                                        <HeaderRow>
                                            {HEADERS.map((title, index) => <HeaderCell key={index}>{title}</HeaderCell>)}
                                        </HeaderRow>
                                        {ROWS.map((row, index) => (
                                            <DataRow key={index}>
                                                <RowHead>{row.mark ? '▶' : ''}</RowHead>
                                                {row.seq && <SeqCell>{row.seq}</SeqCell>}
                                                {row.banner && <BannerCell $wide={row.wide}>{row.banner}</BannerCell>}
                                                {row.cells && row.cells.map((text, cellIndex) => (
                                                    <DataCell key={cellIndex} $selected={row.mark && cellIndex === 2}>{text}</DataCell>
                                                ))}
                                                {row.cells && <DataCell />}
                                            </DataRow>
                                        ))}
                                    </TableGrid>
                                    <VScroll>
                                        <span>▲</span>
                                        <VThumb />
                                        <span>▼</span>
                                    </VScroll>
                                </TableMain>
                                <HScroll>
                                    <span>◀</span>
                                    <HThumb />
                                    <span>▶</span>
                                </HScroll>
                            </TableFrame>
                        </ResultBody>
                    </ResultPanel>
                </Workspace>
            </Body>
            <EdgeTab />
            <ImeBar>
                <ImeLogo>S</ImeLogo>
                <span>中</span>
                <span>•</span>
                <svg width="52" height="7" viewBox="0 0 52 7" fill="none" stroke="#1d4f91">
                    <circle cx="8" cy="4" r="3" />
                    <path d="M19 1v4M17 7h4" strokeWidth="1.6" />
                    <rect x="26" y="2" width="7" height="5" />
                    <circle cx="40" cy="3" r="1.4" fill="#a8b8cc" stroke="none" />
                    <path d="M45 2h6v5h-6z" fill="#1d4f91" />
                </svg>
            </ImeBar>
        </Page>
    )
}

export default App;
